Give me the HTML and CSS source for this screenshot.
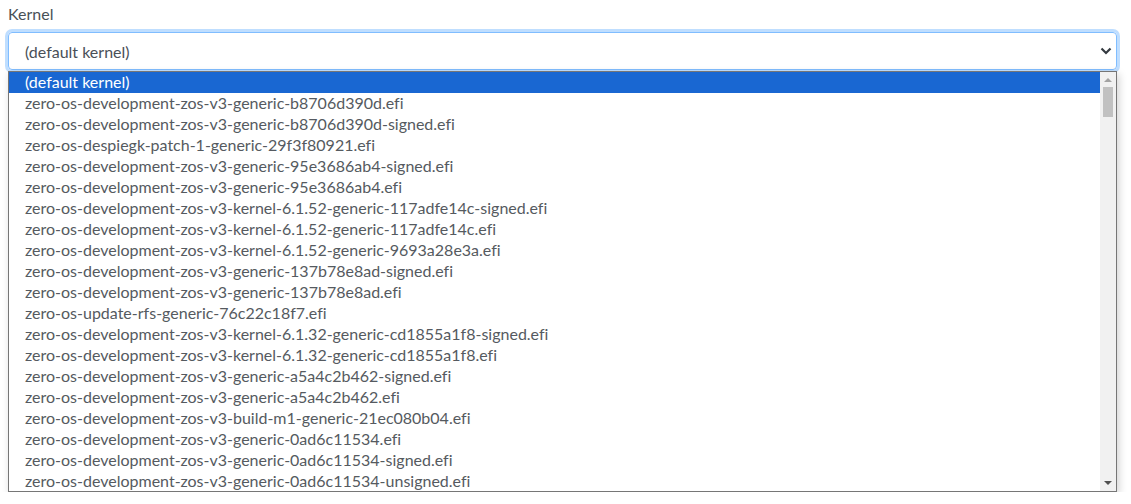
FILE: index.html
```html
<!DOCTYPE html>
<html>
<head>
<meta charset="utf-8">
<link rel="stylesheet" href="styles.css">
</head>
<body>
<div class="field">
  <label class="label">Kernel</label>
  <div class="select">
    <span class="select-value">(default kernel)</span>
    <svg class="chev" width="12" height="8" viewBox="0 0 12 8"><path d="M1.5 1.5 L6 6 L10.5 1.5" fill="none" stroke="#343a40" stroke-width="2.2"/></svg>
  </div>
  <div class="dropdown">
    <ul class="options">
      <li class="opt selected">(default kernel)</li>
      <li class="opt">zero-os-development-zos-v3-generic-b8706d390d.efi</li>
      <li class="opt">zero-os-development-zos-v3-generic-b8706d390d-signed.efi</li>
      <li class="opt">zero-os-despiegk-patch-1-generic-29f3f80921.efi</li>
      <li class="opt">zero-os-development-zos-v3-generic-95e3686ab4-signed.efi</li>
      <li class="opt">zero-os-development-zos-v3-generic-95e3686ab4.efi</li>
      <li class="opt">zero-os-development-zos-v3-kernel-6.1.52-generic-117adfe14c-signed.efi</li>
      <li class="opt">zero-os-development-zos-v3-kernel-6.1.52-generic-117adfe14c.efi</li>
      <li class="opt">zero-os-development-zos-v3-kernel-6.1.52-generic-9693a28e3a.efi</li>
      <li class="opt">zero-os-development-zos-v3-generic-137b78e8ad-signed.efi</li>
      <li class="opt">zero-os-development-zos-v3-generic-137b78e8ad.efi</li>
      <li class="opt">zero-os-update-rfs-generic-76c22c18f7.efi</li>
      <li class="opt">zero-os-development-zos-v3-kernel-6.1.32-generic-cd1855a1f8-signed.efi</li>
      <li class="opt">zero-os-development-zos-v3-kernel-6.1.32-generic-cd1855a1f8.efi</li>
      <li class="opt">zero-os-development-zos-v3-generic-a5a4c2b462-signed.efi</li>
      <li class="opt">zero-os-development-zos-v3-generic-a5a4c2b462.efi</li>
      <li class="opt">zero-os-development-zos-v3-build-m1-generic-21ec080b04.efi</li>
      <li class="opt">zero-os-development-zos-v3-generic-0ad6c11534.efi</li>
      <li class="opt">zero-os-development-zos-v3-generic-0ad6c11534-signed.efi</li>
      <li class="opt">zero-os-development-zos-v3-generic-0ad6c11534-unsigned.efi</li>
    </ul>
    <div class="scrollbar">
      <div class="arrow up"></div>
      <div class="track"><div class="thumb"></div></div>
      <div class="arrow down"></div>
    </div>
  </div>
</div>
</body>
</html>
```
FILE: styles.css
```css
html, body {
  margin: 0;
  padding: 0;
  background: #ffffff;
}
body {
  font-family: "Lato", "Open Sans", sans-serif;
  font-size: 16px;
  color: #555a60;
  font-variant-ligatures: none;
}
.field {
  padding: 4px 14px 0 8px;
}
.label {
  display: block;
  height: 22px;
  line-height: 20px;
  color: #495057;
}
.select {
  margin-top: 6px;
  height: 36px;
  border: 1px solid #80bdff;
  border-radius: 4px;
  box-shadow: 0 0 0 3px rgba(0, 123, 255, 0.25);
  display: flex;
  align-items: center;
  justify-content: space-between;
  padding: 0 4px 0 16px;
  color: #495057;
}
.dropdown {
  margin-top: 1px;
  height: 419px;
  border: 1px solid #767676;
  display: flex;
  box-shadow: 2px 3px 8px rgba(0, 0, 0, 0.18);
  background: #fff;
}
.options {
  list-style: none;
  margin: 0;
  padding: 0;
  flex: 1;
  overflow: hidden;
}
.opt {
  height: 20px;
  line-height: 20px;
  padding: 0 0 1px 16px;
  white-space: nowrap;
  color: #555a60;
}
.opt.selected {
  background: #1967d2;
  color: #ffffff;
}
.scrollbar {
  width: 16px;
  background: #f1f1f1;
  display: flex;
  flex-direction: column;
  align-items: center;
}
.arrow {
  width: 0;
  height: 0;
  border-left: 4px solid transparent;
  border-right: 4px solid transparent;
}
.arrow.up {
  margin-top: 6px;
  border-bottom: 4px solid #a3a3a3;
}
.arrow.down {
  margin-bottom: 6px;
  border-top: 4px solid #505050;
}
.track {
  flex: 1;
  width: 100%;
  padding-top: 5px;
  display: flex;
  justify-content: center;
}
.thumb {
  width: 10px;
  height: 30px;
  background: #c1c1c1;
}
```
